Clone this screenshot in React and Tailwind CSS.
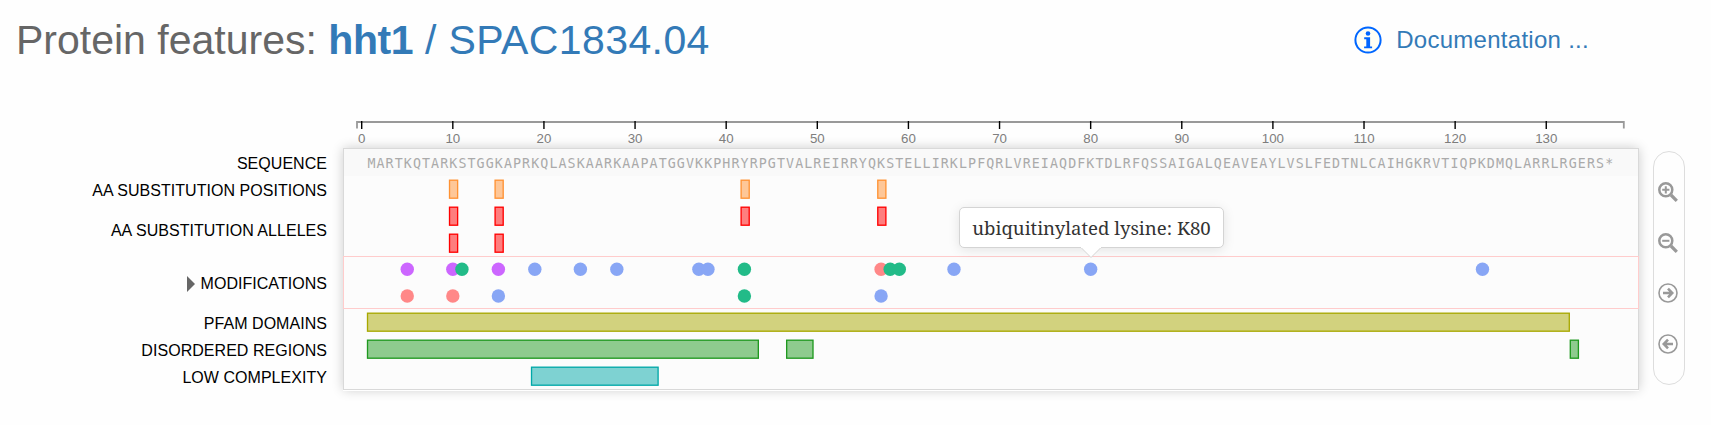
import React from "react";

const SEQUENCE =
  "MARTKQTARKSTGGKAPRKQLASKAARKAAPATGGVKKPHRYRPGTVALREIRRYQKSTELLIRKLPFQRLVREIAQDFKTDLRFQSSAIGALQEAVEAYLVSLFEDTNLCAIHGKRVTIQPKDMQLARRLRGERS*";

const STEP = 9.112;
const ORIGIN = 17.7;
const pos = (n) => ORIGIN + n * STEP;

const TICKS = [0, 10, 20, 30, 40, 50, 60, 70, 80, 90, 100, 110, 120, 130];

const LABELS = [
  ["SEQUENCE", "h-[27px]"],
  ["AA SUBSTITUTION POSITIONS", "h-[27px]"],
  ["AA SUBSTITUTION ALLELES", "h-[53px]"],
  ["MODIFICATIONS", "h-[53px]"],
  ["PFAM DOMAINS", "h-[27px]"],
  ["DISORDERED REGIONS", "h-[27px]"],
  ["LOW COMPLEXITY", "h-[27px]"],
];

const ORANGE = "#ff9233";
const RED = "#ff0000";
const OLIVE = "#a8a800";
const GREEN = "#1f991f";
const TEAL = "#00a8a8";

const BOXES = [
  ...[10, 15, 42, 57].map((n) => [n, n, 32, ORANGE]),
  ...[10, 15, 42, 57].map((n) => [n, n, 59, RED]),
  ...[10, 15].map((n) => [n, n, 86, RED]),
  [1, 132, 165, OLIVE],
  [1, 43, 192, GREEN],
  [47, 49, 192, GREEN],
  [133, 133, 192, GREEN],
  [19, 32, 219, TEAL],
];

const VIOLET = "#cc66ff";
const SALMON = "#ff8888";
const JADE = "#22bb88";
const BLUE = "#88a6f5";

const DOTS = [
  [5, 0, VIOLET], [10, 0, VIOLET], [11, 0, JADE], [15, 0, VIOLET],
  [19, 0, BLUE], [24, 0, BLUE], [28, 0, BLUE], [37, 0, BLUE], [38, 0, BLUE],
  [42, 0, JADE], [57, 0, SALMON], [58, 0, JADE], [59, 0, JADE],
  [65, 0, BLUE], [80, 0, BLUE], [123, 0, BLUE],
  [5, 1, SALMON], [10, 1, SALMON], [15, 1, BLUE], [42, 1, JADE], [57, 1, BLUE],
];

function Header() {
  return (
    <header className="flex h-[80px] items-center justify-between pl-[16px] pr-[122px]">
      <h1 className="text-[41px] leading-[80px] whitespace-nowrap text-[#666]">
        Protein features:{" "}
        <a className="text-[#337ab7]">
          <b className="tracking-[-0.4px]">hht1</b>
          <span className="tracking-[0.4px]"> / SPAC1834.04</span>
        </a>
      </h1>
      <a className="flex items-center gap-[14px] text-[24px] tracking-[0.28px] text-[#337ab7]">
        <svg width="28" height="28" viewBox="0 0 28 28">
          <circle cx="14" cy="14" r="12.6" fill="#fffff4" stroke="#0066ff" strokeWidth="2" />
          <circle cx="14" cy="7.5" r="2.3" fill="#0066ff" />
          <path d="M10.2 11.3h5.9v9.1h2v1.9h-8v-1.9h2.2v-7.2h-2.1z" fill="#0066ff" />
        </svg>
        Documentation ...
      </a>
    </header>
  );
}

function Labels() {
  return (
    <div className="flex w-[327px] flex-col pt-[70px] text-right text-[16px] text-black">
      {LABELS.map(([text, height]) => (
        <div key={text} className={"flex items-center justify-end gap-[6px] " + height}>
          {text === "MODIFICATIONS" && (
            <svg width="8" height="16" viewBox="0 0 8 16">
              <path d="M0 0L8 8L0 16z" fill="#666" />
            </svg>
          )}
          <span className="tracking-[0.04px]">{text}</span>
        </div>
      ))}
    </div>
  );
}

function Axis() {
  return (
    <svg className="block overflow-visible" width="1296" height="68">
      <path d="M14 48.5V42H1280.8V48.5" fill="none" stroke="#999" strokeWidth="1.8" />
      {TICKS.map((n) => (
        <g key={n}>
          <line x1={pos(n) + 1} x2={pos(n) + 1} y1="41" y2="49" stroke="#000" strokeWidth="1.4" />
          <text x={pos(n) + 1} y="63" fontSize="13.3" textAnchor="middle" fill="#808080">
            {n}
          </text>
        </g>
      ))}
    </svg>
  );
}

function Tracks() {
  return (
    <svg className="block overflow-visible" width="1294" height="240">
      <rect x="0" y="0" width="1294" height="27" fill="#f9f9f9" />
      <text
        x="23.4"
        y="19"
        fontSize="13.3"
        textLength={SEQUENCE.length * STEP - 2.6}
        fill="#aaa"
        className="font-['DejaVu_Sans_Mono',monospace]"
      >
        {SEQUENCE}
      </text>
      <rect x="-0.5" y="107.5" width="1295" height="52" fill="none" stroke="#ffcccc" />
      {BOXES.map(([a, b, y, color]) => (
        <rect
          key={a + "-" + y}
          x={pos(a) - 3.3}
          y={y - 0.8}
          width={(b - a + 1) * STEP - 1}
          height="18"
          fill={color}
          fillOpacity="0.5"
          stroke={color}
          strokeWidth="1.33"
        />
      ))}
      {DOTS.map(([n, row, color]) => (
        <circle key={n + "-" + row} cx={pos(n)} cy={120.3 + row * 26.7} r="6.7" fill={color} />
      ))}
    </svg>
  );
}

function Tooltip() {
  return (
    <div className="absolute left-[615px] top-[58px] flex h-[41px] w-[265px] items-center justify-center rounded-[5px] border border-[#d4d4d4] bg-white font-['Noto_Serif','Droid_Serif','DejaVu_Serif',serif] text-[18.6px] whitespace-nowrap text-[#333] shadow-[0_2px_12px_rgba(0,0,0,0.1)]">
      ubiquitinylated lysine: K80
      <svg className="absolute left-[121px] top-[38.5px]" width="20" height="11" viewBox="0 0 20 11">
        <path d="M0 0.5L10 10.5L20 0.5" fill="#fff" stroke="#d4d4d4" />
        <path d="M0 0H20" stroke="#fff" strokeWidth="2" />
      </svg>
    </div>
  );
}

function Controls() {
  const lens = "M7.8 7.8m-6.5 0a6.5 6.5 0 1 0 13 0a6.5 6.5 0 1 0-13 0";
  return (
    <div className="ml-[14px] mt-[71px] flex h-[234px] w-[32px] flex-col items-center gap-[31px] rounded-[16px] border border-[#ddd] pt-[30px] pr-[2px]">
      {["M7.8 4.2v7.2M4.2 7.8h7.2", "M4.2 7.8h7.2"].map((d) => (
        <svg key={d} width="20" height="20" viewBox="0 0 20 20" fill="none" stroke="#999">
          <path d={lens} strokeWidth="2.5" />
          <path d={d} strokeWidth="2" />
          <path d="M13 13L18.8 18.8" strokeWidth="3.2" />
        </svg>
      ))}
      {["M5 10H13M10 5.7L14.2 10L10 14.3", "M15 10H7M10 5.7L5.8 10L10 14.3"].map((d) => (
        <svg key={d} className="-mt-px mb-px" width="20" height="20" viewBox="0 0 20 20" fill="none" stroke="#999">
          <circle cx="10" cy="10" r="9" strokeWidth="1.6" />
          <path d={d} strokeWidth="2.6" />
        </svg>
      ))}
    </div>
  );
}

export default function App() {
  return (
    <div className="h-[425px] w-[1711px] overflow-hidden bg-[#fefefe] font-['Liberation_Sans',sans-serif]">
      <Header />
      <main className="flex items-start">
        <Labels />
        <div className="ml-[16px] w-[1296px]">
          <Axis />
          <div className="relative h-[242px] border border-[#d9d9d9] bg-[#fcfcfc] shadow-[0_1px_0_#fff,0_0_11px_rgba(0,0,0,0.2)]">
            <Tracks />
            <Tooltip />
          </div>
        </div>
        <Controls />
      </main>
    </div>
  );
}
